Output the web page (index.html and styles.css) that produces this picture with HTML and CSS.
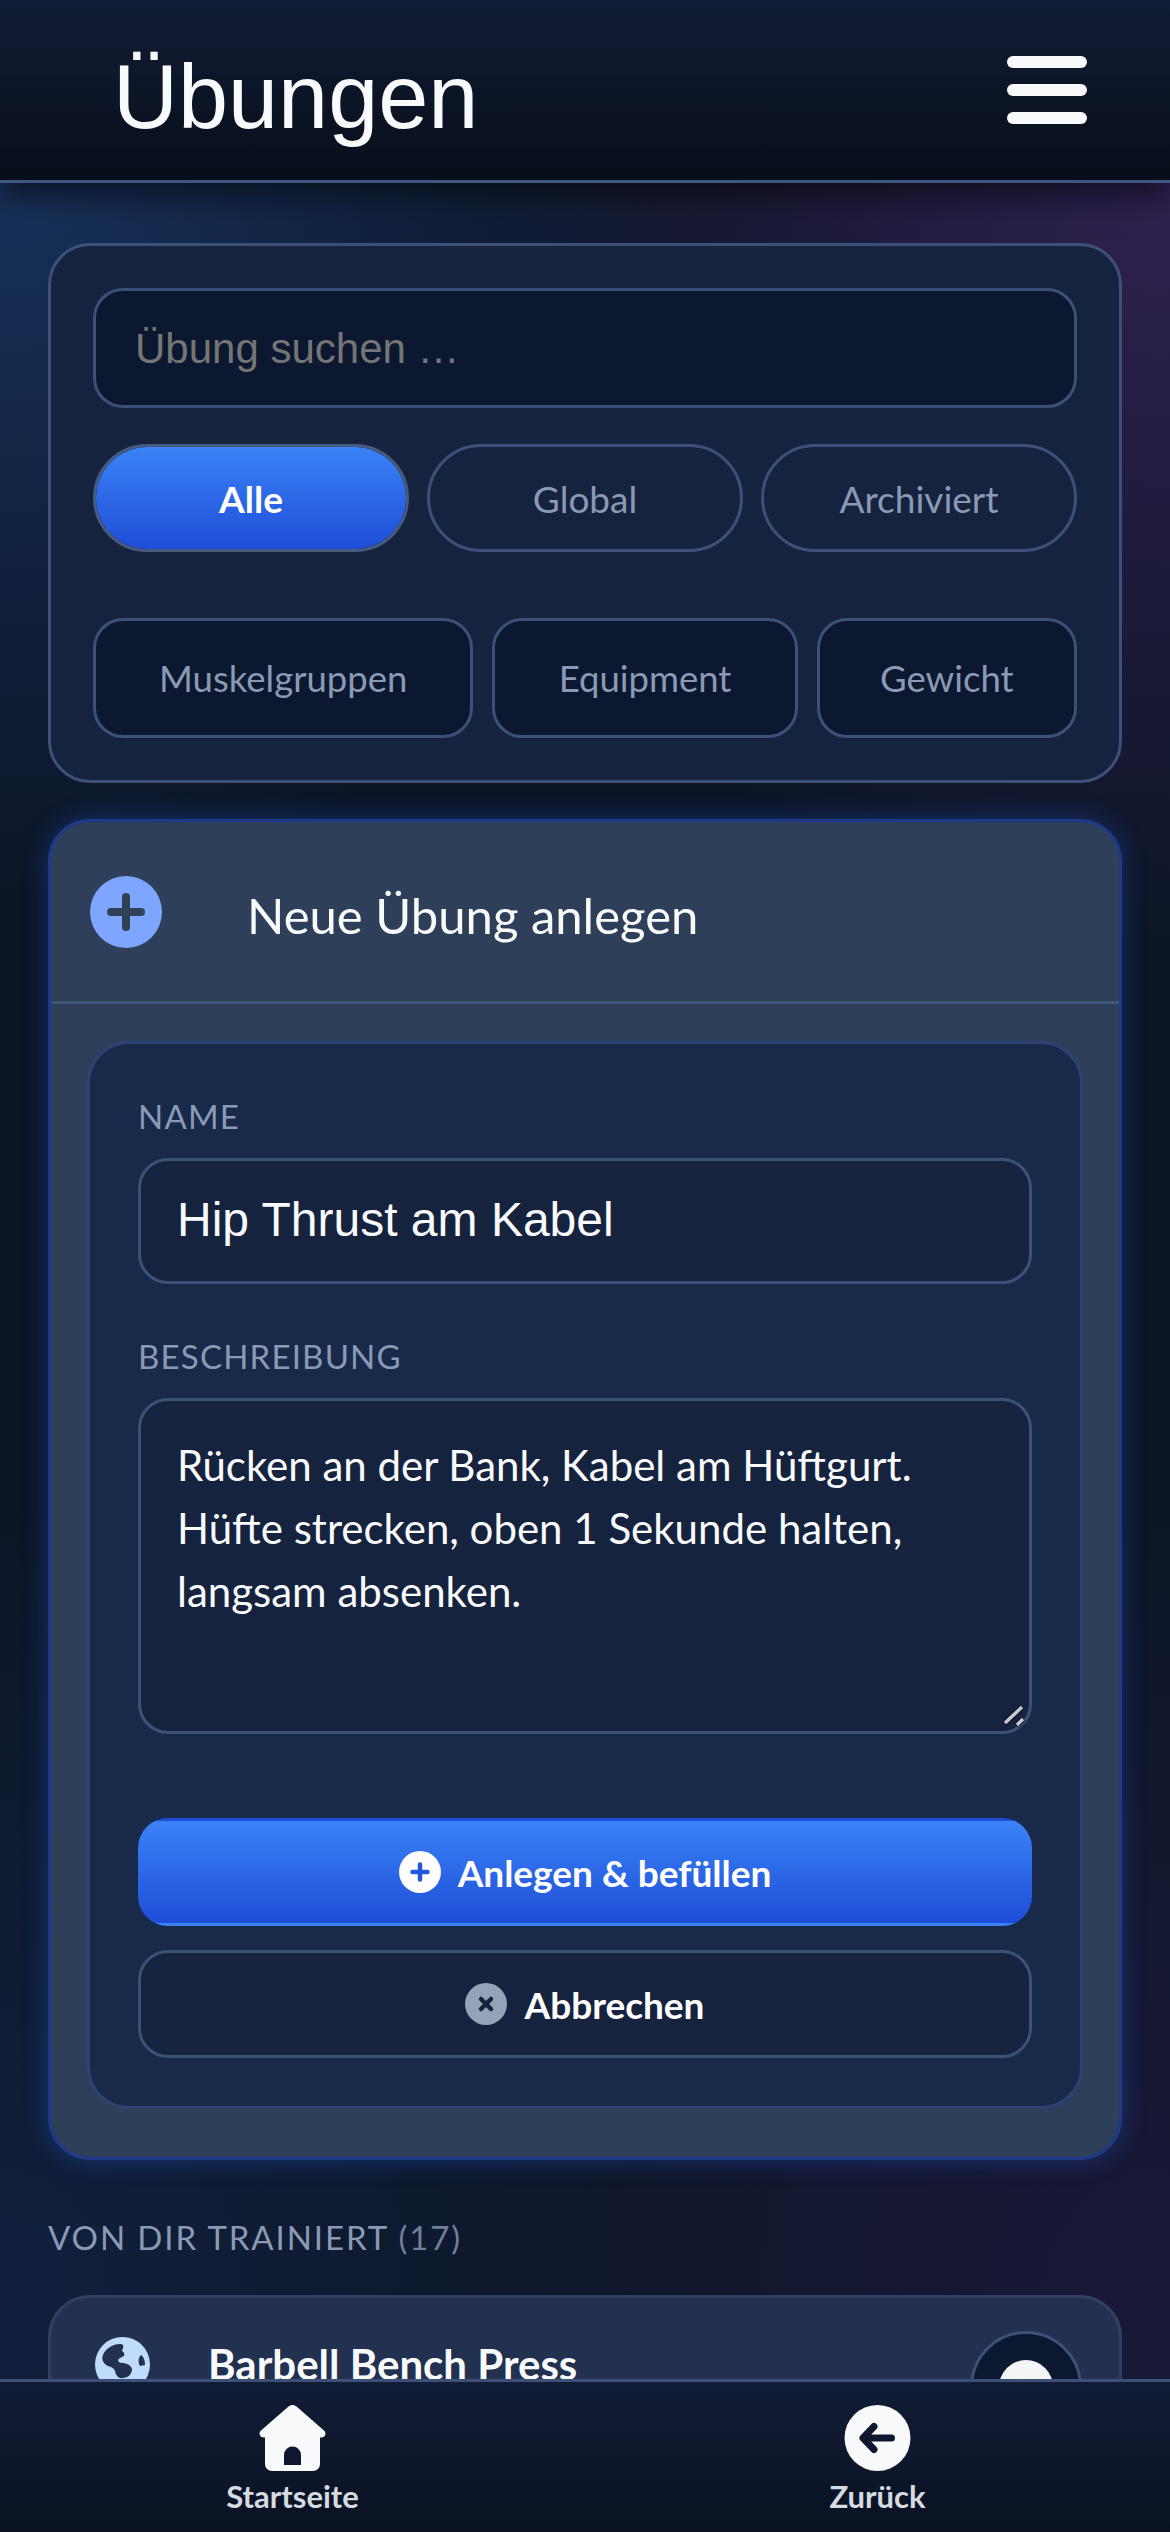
FILE: index.html
```html
<!DOCTYPE html>
<html lang="de">
<head>
<meta charset="utf-8">
<title>Übungen</title>
<link rel="stylesheet" href="styles.css">
</head>
<body>
<div class="app">
  <header class="topbar">
    <h1 class="title">Übungen</h1>
    <button class="menu" aria-label="Menü"><span></span><span></span><span></span></button>
  </header>
  <main class="content">
    <section class="card filters">
      <input class="search" type="text" placeholder="Übung suchen …">
      <div class="chips">
        <button class="chip active">Alle</button>
        <button class="chip">Global</button>
        <button class="chip">Archiviert</button>
      </div>
      <div class="selects">
        <button class="select">Muskelgruppen</button>
        <button class="select">Equipment</button>
        <button class="select">Gewicht</button>
      </div>
    </section>
    <section class="create">
      <div class="create-head">
        <svg class="create-icon" viewBox="0 0 72 72"><circle cx="36" cy="36" r="36" fill="#7fa6ff"/><path d="M36 21v30M21 36h30" stroke="#2f4058" stroke-width="8" stroke-linecap="round"/></svg>
        <h2 class="create-title">Neue Übung anlegen</h2>
      </div>
      <form class="form">
        <label class="label" for="n">NAME</label>
        <input class="field" id="n" type="text" value="Hip Thrust am Kabel">
        <label class="label second" for="d">BESCHREIBUNG</label>
        <div class="area-wrap">
          <textarea class="area" id="d">Rücken an der Bank, Kabel am Hüftgurt. Hüfte strecken, oben 1 Sekunde halten, langsam absenken.</textarea>
          <svg class="grip" viewBox="0 0 30 30"><path d="M9 22L26 6M21 24l6-6" fill="none" stroke="#0b1226" stroke-width="6"/><path d="M9 22L26 6M21 24l6-6" fill="none" stroke="#c3c7cf" stroke-width="3.500"/></svg>
        </div>
        <button class="btn primary" type="button">
          <svg class="btn-icon" viewBox="0 0 42 42"><circle cx="21" cy="21" r="21" fill="#fff"/><path d="M21 13.500v15M13.500 21h15" stroke="#2257e0" stroke-width="4.500" stroke-linecap="round"/></svg>
          Anlegen &amp; befüllen
        </button>
        <button class="btn secondary" type="button">
          <svg class="btn-icon" viewBox="0 0 42 42"><circle cx="21" cy="21" r="21" fill="#94a3b8"/><path d="M16 16l10 10M26 16L16 26" stroke="#16233f" stroke-width="4.500" stroke-linecap="round"/></svg>
          Abbrechen
        </button>
      </form>
    </section>
    <h3 class="section">VON DIR TRAINIERT <span class="count">(17)</span></h3>
    <article class="item">
      <svg class="globe" viewBox="0 0 55 55"><circle cx="27.500" cy="27.500" r="27.500" fill="#bfdbfe"/><path d="M8 18c3-7 10-11 17-11 3 0 4 2 3 4l-1 3c2 1 3 3 2 5-2 1-5 2-6 4 0 2 2 3 4 3 4 0 9 2 10 6 0 5-4 9-9 9-5 1-7-3-8-7-1-3-4-4-7-5-4-2-7-6-5-11z" fill="#223150"/><path d="M46 18c3 2 4 6 4 10l-5 1c-2-3-2-8 1-11z" fill="#223150"/></svg>
      <div class="item-name">Barbell Bench Press</div>
      <button class="item-btn" aria-label="Öffnen"><span class="dot"></span></button>
    </article>
  </main>
  <nav class="bottombar">
    <a class="nav">
      <svg class="nav-icon" viewBox="0 0 67 66"><path d="M29.500 1.500a6 6 0 0 1 8 0l27.500 24c3 3 1 7-3 7h-1V59a7 7 0 0 1-7 7H13a7 7 0 0 1-7-7V32.500H5c-4 0-6-4-3-7z" fill="#f8f9fb"/><path d="M25 60V50a8.500 8.500 0 0 1 17 0v10z" fill="#0d1830"/></svg>
      <span>Startseite</span>
    </a>
    <a class="nav">
      <svg class="nav-icon" viewBox="0 0 67 66"><circle cx="33.500" cy="33" r="33" fill="#f8f9fb"/><path d="M47.500 33H20M30 21.500L19 33l11 11.500" fill="none" stroke="#0d1830" stroke-width="7" stroke-linecap="round" stroke-linejoin="round"/></svg>
      <span>Zurück</span>
    </a>
  </nav>
</div>
</body>
</html>
```
FILE: styles.css
```css
* { box-sizing: border-box; }
html, body { margin: 0; height: 100%; }
body {
  font-family: Lato, sans-serif;
  color: #f8fafc;
  background:
    radial-gradient(ellipse 700px 750px at 0 150px, rgba(30,64,120,.65), transparent 100%),
    radial-gradient(ellipse 700px 750px at 100% 200px, rgba(80,45,120,.5), transparent 100%),
    radial-gradient(ellipse 750px 800px at 100% 2300px, rgba(60,35,100,.3), transparent 100%),
    radial-gradient(ellipse 650px 800px at 0 2300px, rgba(25,55,105,.35), transparent 100%),
    #0c1526;
}
.app { height: 2532px; display: flex; flex-direction: column; overflow: hidden; }

.topbar {
  flex: none;
  height: 183px;
  padding: 0 83px 0 113px;
  display: flex;
  align-items: center;
  justify-content: space-between;
  background: linear-gradient(#111c36, #080e19);
  border-bottom: 3px solid #40557f;
  box-shadow: 0 12px 30px rgba(0,0,0,.55);
  position: relative;
  z-index: 2;
}
.title {
  margin: 14px 0 0;
  font: 400 90px/1 "Liberation Sans", sans-serif;
  color: #f8fafc;
}
.menu {
  width: 80px;
  padding: 0;
  border: 0;
  background: none;
  display: flex;
  flex-direction: column;
  gap: 16px;
}
.menu span { height: 12px; border-radius: 6px; background: #f8fafc; }

.content { flex: 1; min-height: 0; overflow: hidden; padding: 60px 48px 0; }

.card {
  background: #15233f;
  border: 3px solid #3c5078;
  border-radius: 42px;
  padding: 42px;
}
.search {
  display: block;
  width: 100%;
  height: 120px;
  padding: 2px 39px 0;
  font: 42px "Liberation Sans", sans-serif;
  color: #f8fafc;
  background: #0b1830;
  border: 3px solid #3c5078;
  border-radius: 30px;
  outline: none;
}
.chips { display: grid; grid-template-columns: repeat(3, 1fr); gap: 18px; margin-top: 36px; }
.chip {
  height: 108px;
  font: 400 37px Lato, sans-serif;
  color: #8a9ab4;
  background: transparent;
  border: 3px solid #3c5078;
  border-radius: 54px;
}
.chip.active {
  font-weight: 700;
  color: #fff;
  background: linear-gradient(#3b82f6, #1d4ed8);
  background-clip: padding-box;
  border-color: #475a7f;
}
.selects { display: grid; grid-template-columns: 380fr 305fr 260fr; gap: 19px; margin-top: 66px; }
.select {
  height: 120px;
  padding: 0;
  font: 400 36.500px Lato, sans-serif;
  color: #8a9ab4;
  background: #0c1830;
  border: 3px solid #3c5078;
  border-radius: 30px;
}

.create {
  margin-top: 36px;
  background: #2e3f5a;
  border: 3px solid #1e3a8a;
  border-radius: 42px;
  box-shadow: 0 0 24px rgba(37,99,235,.35);
  overflow: hidden;
}
.create-head {
  height: 182px;
  padding-left: 39px;
  display: flex;
  align-items: center;
  gap: 85px;
  border-bottom: 3px solid #41557a;
}
.create-icon { width: 72px; height: 72px; flex: none; }
.create-title { margin: 6px 0 0; font: 400 49px Lato, sans-serif; color: #f8fafc; }
.form {
  margin: 37px 36px 48px;
  padding: 50px 48px 48px;
  background: #18294a;
  border: 3px solid #2d4272;
  border-radius: 42px;
  display: flex;
  flex-direction: column;
}
.label { font-size: 33px; line-height: 45px; letter-spacing: 1.200px; color: #8a9ab4; }
.label.second { margin-top: 50px; }
.field {
  display: block;
  width: 100%;
  height: 126px;
  margin-top: 19px;
  padding: 0 36px 3px;
  font: 48px "Liberation Sans", sans-serif;
  color: #f8fafc;
  background: #16233f;
  border: 3px solid #3c5078;
  border-radius: 30px;
  outline: none;
}
.area-wrap { position: relative; margin-top: 19px; }
.area {
  display: block;
  width: 100%;
  height: 336px;
  padding: 33px 36px;
  font: 42px/63px Lato, sans-serif;
  color: #f8fafc;
  background: #16233f;
  border: 3px solid #3c5078;
  border-radius: 30px;
  outline: none;
  resize: none;
}
.grip {
  position: absolute;
  right: 6px;
  bottom: 3px;
  width: 30px;
  height: 30px;
  pointer-events: none;
}
.btn {
  height: 108px;
  display: flex;
  align-items: center;
  justify-content: center;
  gap: 17px;
  font: 700 37px Lato, sans-serif;
  color: #fff;
  border-radius: 30px;
}
.primary {
  margin-top: 84px;
  border: 3px solid transparent;
  background: linear-gradient(#3b82f6, #1d4ed8);
}
.secondary {
  margin-top: 24px;
  background: #16233f;
  border: 3px solid #3c5078;
}
.btn-icon { width: 42px; height: 42px; flex: none; }

.section {
  margin: 55px 0 0;
  font-size: 33px;
  font-weight: 400;
  line-height: 45px;
  letter-spacing: 1.900px;
  color: #8a9ab4;
}
.count { color: #6f7f9a; }
.item {
  margin-top: 35px;
  height: 184px;
  padding: 33px 37px 0 44px;
  display: flex;
  align-items: flex-start;
  background: #223150;
  border: 3px solid #2f4060;
  border-radius: 42px;
}
.globe { width: 55px; height: 55px; flex: none; margin-top: 6px; }
.item-name { margin: 8px 0 0 58px; flex: 1; font-size: 42px; font-weight: 700; line-height: 50px; color: #f8fafc; }
.item-btn {
  width: 112px;
  height: 112px;
  padding: 0;
  display: flex;
  align-items: center;
  justify-content: center;
  background: #0b1830;
  border: 3px solid #3c5078;
  border-radius: 50%;
}
.dot { width: 54px; height: 54px; border-radius: 50%; background: #f4f5f7; }

.bottombar {
  flex: none;
  height: 153px;
  display: grid;
  grid-template-columns: 1fr 1fr;
  background: linear-gradient(#111c36, #0a1222);
  border-top: 3px solid #3c5078;
  position: relative;
  z-index: 2;
}
.nav {
  display: flex;
  flex-direction: column;
  align-items: center;
  padding-top: 23px;
  font-size: 31px;
  font-weight: 700;
  line-height: 41px;
  color: #d6dae1;
}
.nav-icon { width: 67px; height: 66px; margin-bottom: 5px; }
```
